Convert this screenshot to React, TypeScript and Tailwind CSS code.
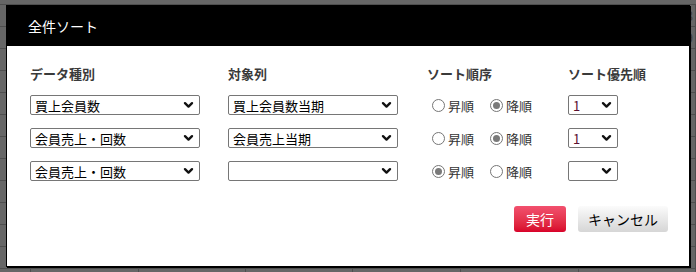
import React from "react";

const font = { fontFamily: '"Noto Sans CJK JP", "Noto Sans", sans-serif' };

const colWidths = [32, 110, 110, 110, 110, 121, 120];
const rowCount = 13;

const Chevron = () => (
  <svg width="11" height="8" viewBox="0 0 11 8" className="pointer-events-none absolute right-[6px] top-1/2 -translate-y-1/2">
    <path d="M2 2.2 L5.5 5.6 L9 2.2" fill="none" stroke="#111" strokeWidth="2.4" strokeLinecap="round" strokeLinejoin="round" />
  </svg>
);

const Select = ({ value, width, accent }: { value: string; width: string; accent?: boolean }) => (
  <div className={`relative h-[20px] ${width}`}>
    <div
      className={`flex h-full w-full items-center rounded-[2px] border border-[#767676] bg-white pl-[4px] text-[13px] leading-none ${
        accent ? "text-[#5c1030]" : "text-black"
      }`}
    >
      {value}
    </div>
    <Chevron />
  </div>
);

const Radio = ({ checked, label }: { checked?: boolean; label: string }) => (
  <div className="flex items-center">
    <span className="flex h-[13px] w-[13px] items-center justify-center rounded-full border border-[#767676] bg-white">
      {checked && <span className="h-[7px] w-[7px] rounded-full bg-[#7a7a7a]" />}
    </span>
    <span className="ml-[3px] text-[13px] leading-none text-[#333]">{label}</span>
  </div>
);

const rows = [
  { type: "買上会員数", target: "買上会員数当期", asc: false, prio: "1" },
  { type: "会員売上・回数", target: "会員売上当期", asc: false, prio: "1" },
  { type: "会員売上・回数", target: "", asc: true, prio: "" },
];

export default function App() {
  return (
    <div className="relative h-[272px] w-[696px] overflow-hidden bg-[#666666]" style={font}>
      {/* spreadsheet behind */}
      <div className="flex flex-col pt-[4px]">
        {Array.from({ length: rowCount }).map((_, r) => (
          <div key={r} className="flex h-[22px] border-t border-[#4e4e4e]">
            {colWidths.map((w, c) => (
              <div
                key={c}
                className="flex h-full items-center justify-end border-r border-[#4e4e4e] pr-[2px] text-[13px] text-[#3c3c3c]"
                style={{ width: w }}
              >
                {c === 6 && r < 2 ? String(8 + r) : ""}
              </div>
            ))}
          </div>
        ))}
      </div>

      {/* dialog */}
      <div className="absolute left-[6px] top-[5px] flex h-[262px] w-[684px] flex-col border border-black bg-white shadow-[1px_1px_0_#000]">
        <div className="flex h-[40px] items-center bg-black pl-[21px] text-[14px] text-white">全件ソート</div>

        <div className="flex flex-1 flex-col pl-[23px] pr-[21px] pt-[21px]">
          <div className="flex text-[13px] font-bold leading-none text-[#3a3a3a]">
            <div className="w-[198px]">データ種別</div>
            <div className="w-[199px]">対象列</div>
            <div className="w-[141px]">ソート順序</div>
            <div>ソート優先順</div>
          </div>

          <div className="mt-[15px] flex flex-col gap-[13px]">
            {rows.map((row, i) => (
              <div key={i} className="flex items-center">
                <div className="w-[198px]">
                  <Select value={row.type} width="w-[170px]" />
                </div>
                <div className="w-[199px]">
                  <Select value={row.target} width="w-[170px]" />
                </div>
                <div className="flex w-[141px] gap-[16px] pl-[5px]">
                  <Radio label="昇順" checked={row.asc} />
                  <Radio label="降順" checked={!row.asc} />
                </div>
                <Select value={row.prio} width="w-[50px]" accent />
              </div>
            ))}
          </div>

          <div className="mt-[25px] flex justify-end gap-[12px]">
            <button className="h-[26px] w-[52px] rounded-[3px] bg-gradient-to-b from-[#f2506e] to-[#d8002a] text-[14px] text-white">
              実行
            </button>
            <button className="h-[26px] w-[90px] rounded-[3px] bg-gradient-to-b from-[#fbfbfb] to-[#d6d6d6] text-[14px] text-black">
              キャンセル
            </button>
          </div>
        </div>
      </div>
    </div>
  );
}
